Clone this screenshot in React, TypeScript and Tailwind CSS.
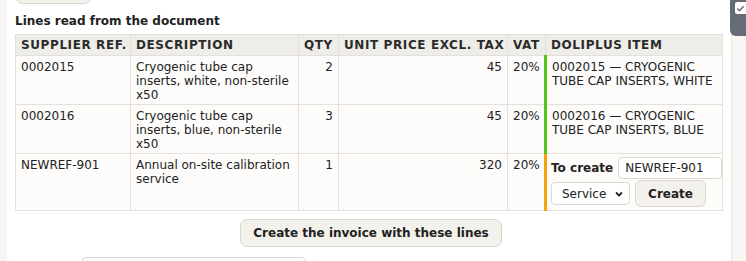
import React from "react";

type Line = {
  ref: string;
  desc: string;
  qty: number;
  price: number;
  vat: string;
  match?: string;
};

const lines: Line[] = [
  { ref: "0002015", desc: "Cryogenic tube cap inserts, white, non-sterile x50", qty: 2, price: 45, vat: "20%", match: "0002015 — CRYOGENIC TUBE CAP INSERTS, WHITE" },
  { ref: "0002016", desc: "Cryogenic tube cap inserts, blue, non-sterile x50", qty: 3, price: 45, vat: "20%", match: "0002016 — CRYOGENIC TUBE CAP INSERTS, BLUE" },
  { ref: "NEWREF-901", desc: "Annual on-site calibration service", qty: 1, price: 320, vat: "20%" },
];

const th = "border border-[#e4e1da] px-[5px] py-[3px] text-left font-bold tracking-[0.05em] whitespace-nowrap";
const td = "border border-[#e4e1da] px-[5px] pt-[4px] pb-[2px] align-top";

export default function App() {
  return (
    <div
      className="relative flex min-h-screen bg-[#f7f6f3] text-[12px] leading-[14px] text-[#222]"
      style={{ fontFamily: '"DejaVu Sans", Verdana, sans-serif' }}
    >
      <div className="w-[7px] shrink-0" />
      <div className="h-[261px] w-[725px] shrink-0 overflow-hidden border-r border-[#ebe8e2] bg-white px-[8px]">
        <button className="-mt-[24px] block h-[28px] w-[77px] rounded-[8px] border border-[#dcd8cf] bg-[#f3f1ec]" />

        <h2 className="mt-[10px] font-bold">Lines read from the document</h2>

        <table className="mt-[6px] w-[707px] table-fixed border-collapse">
          <colgroup>
            <col className="w-[115px]" />
            <col className="w-[168px]" />
            <col className="w-[40px]" />
            <col className="w-[169px]" />
            <col className="w-[38px]" />
            <col className="w-[177px]" />
          </colgroup>
          <thead>
            <tr className="bg-[#efede8] text-[#2b2b2b]">
              <th className={th}>SUPPLIER REF.</th>
              <th className={th}>DESCRIPTION</th>
              <th className={th}>QTY</th>
              <th className={th}>UNIT PRICE EXCL. TAX</th>
              <th className={th}>VAT</th>
              <th className={th}>DOLIPLUS ITEM</th>
            </tr>
          </thead>
          <tbody className="bg-[#fdfcfa]">
            {lines.map((l) => (
              <tr key={l.ref} className={l.match ? "h-[49px]" : ""}>
                <td className={td}>{l.ref}</td>
                <td className={td}>{l.desc}</td>
                <td className={`${td} text-right`}>{l.qty}</td>
                <td className={`${td} text-right`}>{l.price}</td>
                <td className={`${td} text-right`}>{l.vat}</td>
                {l.match ? (
                  <td className={`${td} border-l-[3px] border-l-[#52c41a]`}>{l.match}</td>
                ) : (
                  <td className="border border-[#e4e1da] border-l-[3px] border-l-[#f5a30f] px-[4px] pt-[3px] pb-[3px] align-top">
                    <div className="flex items-center gap-[5px]">
                      <span className="whitespace-nowrap font-bold">To create</span>
                      <input
                        readOnly
                        value="NEWREF-901"
                        className="h-[22px] w-[104px] rounded-[4px] border border-[#dcd8cf] bg-white px-[6px] text-[12px] text-[#222] outline-none"
                      />
                    </div>
                    <div className="mt-[1px] flex items-center gap-[5px]">
                      <div className="flex h-[23px] w-[79px] items-center justify-between rounded-[4px] border border-[#dcd8cf] bg-white pl-[10px] pr-[5px]">
                        <span>Service</span>
                        <svg width="10" height="10" viewBox="0 0 10 10">
                          <path d="M2 3.5 L5 6.5 L8 3.5" fill="none" stroke="#222" strokeWidth="1.8" />
                        </svg>
                      </div>
                      <button className="h-[27px] w-[71px] rounded-[6px] border border-[#dcd8cf] bg-[#f3f1ec] font-bold">
                        Create
                      </button>
                    </div>
                  </td>
                )}
              </tr>
            ))}
          </tbody>
        </table>

        <div className="mt-[8px] flex justify-center">
          <button className="ml-[4px] h-[28px] w-[262px] rounded-[7px] border border-[#dcd8cf] bg-[#f3f1ec] font-bold">
            Create the invoice with these lines
          </button>
        </div>

        <div className="ml-[67px] mt-[10px] h-[26px] w-[224px] rounded-[4px] border border-[#dcd8cf] bg-white" />
      </div>

      <div className="absolute right-0 top-0 flex h-[36px] w-[16px] justify-end rounded-bl-[6px] bg-[#666b78] pt-[2px]">
        <div className="flex h-[12px] w-[11px] items-center justify-center rounded-l-[2px] bg-white">
          <svg width="9" height="9" viewBox="0 0 10 10">
            <path d="M1.5 5 L4 7.5 L8.5 2.5" fill="none" stroke="#666b78" strokeWidth="1.6" />
          </svg>
        </div>
      </div>
    </div>
  );
}
